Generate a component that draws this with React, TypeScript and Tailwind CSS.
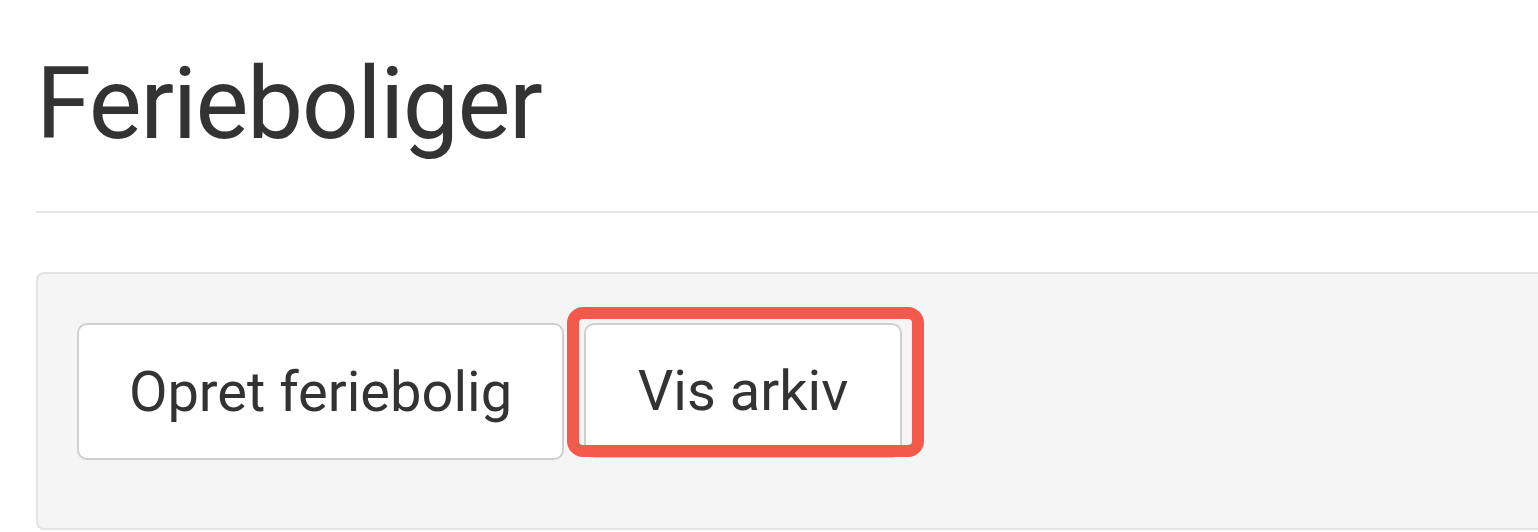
export default function App() {
  return (
    <div className="min-h-[532px] bg-white pl-[36px] font-['Roboto',sans-serif] text-[#333] overflow-hidden">
      {/* Page title */}
      <h1 className="pt-[54px] text-[100px] leading-[100px] font-normal tracking-[-1.5px]">
        Ferieboliger
      </h1>

      {/* Divider */}
      <div className="mt-[57px] h-[2px] bg-[#e6e6e6]" />

      {/* Toolbar well */}
      <div className="mt-[59px] h-[258px] -mr-[20px] rounded-[8px] border-2 border-[#e3e3e3] bg-[#f5f5f5] pl-[39px] pt-[49px]">
        <div className="flex gap-[20px]">
          <button className="h-[137px] w-[487px] rounded-[10px] border-2 border-[#cfcfcf] bg-white text-[56px] text-[#333]">
            Opret feriebolig
          </button>
          <div className="relative">
            <button className="h-[135px] w-[318px] rounded-[10px] border-2 border-[#cfcfcf] bg-white text-[56px] text-[#333]">
              Vis arkiv
            </button>
            {/* highlight outline */}
            <div className="pointer-events-none absolute -left-[17px] -top-[16px] h-[150px] w-[357px] rounded-[16px] border-[12px] border-[#f45a4c]" />
          </div>
        </div>
      </div>
    </div>
  );
}
